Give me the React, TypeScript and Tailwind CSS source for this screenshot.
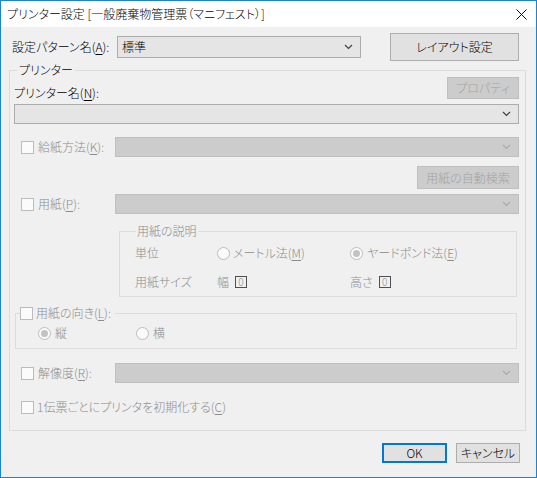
import React from "react";

const FONT = "font-['Noto_Sans_CJK_JP','Noto_Sans',sans-serif] font-light [font-feature-settings:'palt']";

function Chevron({ disabled }: { disabled?: boolean }) {
  return (
    <svg width="9" height="6" viewBox="0 0 9 6" className="shrink-0">
      <polyline
        points="1,1 4.5,4.5 8,1"
        fill="none"
        stroke={disabled ? "#a9a9a9" : "#3c3c3c"}
        strokeWidth="1.1"
      />
    </svg>
  );
}

function Combo({ text, disabled, className }: { text?: string; disabled?: boolean; className: string }) {
  return (
    <div
      className={
        (disabled ? "bg-[#cccccc] border-[#bfbfbf] " : "bg-[#e5e5e5] border-[#adadad] ") +
        "flex items-center justify-between border pl-[4px] pr-[7px] text-black " +
        className
      }
    >
      <span>{text}</span>
      <Chevron disabled={disabled} />
    </div>
  );
}

function Check() {
  return <span className="block w-[13px] h-[13px] shrink-0 border border-[#bcbcbc] bg-[#fbfbfb]" />;
}

function Radio({ checked }: { checked?: boolean }) {
  return (
    <span className="flex w-[13px] h-[13px] shrink-0 items-center justify-center rounded-full border border-[#bcbcbc] bg-[#fbfbfb]">
      {checked && <span className="block w-[7px] h-[7px] rounded-full bg-[#c2c2c2]" />}
    </span>
  );
}

function Mn({ children }: { children: React.ReactNode }) {
  return <span className="underline underline-offset-[2px]">{children}</span>;
}

function DisabledButton({ children, className }: { children: React.ReactNode; className: string }) {
  return (
    <div
      className={
        "flex items-center justify-center border border-[#bfbfbf] bg-[#cccccc] text-[#a3a3a3] " + className
      }
    >
      {children}
    </div>
  );
}

function ValueBox() {
  return (
    <span className="flex w-[12px] h-[12px] items-center justify-center border border-[#505050] text-[10px] leading-none text-[#8c8c8c]">
      0
    </span>
  );
}

export default function App() {
  return (
    <div
      className={
        "w-[537px] h-[478px] flex flex-col border border-[#1883d7] bg-[#f0f0f0] text-[12px] leading-[16px] text-black " +
        FONT
      }
    >
      {/* title bar */}
      <div className="h-[26px] shrink-0 bg-white flex items-center justify-between pl-[6px] pr-[9px]">
        <span>プリンター設定 [一般廃棄物管理票（マニフェスト）]</span>
        <svg width="11" height="11" viewBox="0 0 11 11">
          <path d="M0.5 0.5 L10.5 10.5 M10.5 0.5 L0.5 10.5" stroke="#111" strokeWidth="1" />
        </svg>
      </div>

      <div className="flex flex-col pl-[8px] pr-[10px]">
        {/* pattern row */}
        <div className="mt-[6px] h-[28px] flex items-center">
          <span className="ml-[3px] w-[105px]">
            設定パターン名(<Mn>A</Mn>):
          </span>
          <Combo text="標準" className="w-[244px] h-[22px]" />
          <div className="ml-[29px] w-[129px] h-[28px] flex items-center justify-center border border-[#adadad] bg-[#e1e1e1]">
            レイアウト設定
          </div>
        </div>

        {/* printer group */}
        <fieldset className="mt-[1px] border border-[#dcdcdc] pl-[4px] pr-[6px] pb-[13px]">
          <legend className="ml-[3px] px-[2px] leading-[16px]">プリンター</legend>

          <div className="-mt-[1px] h-[22px] flex items-start justify-between">
            <span className="mt-[8px]">
              プリンター名(<Mn>N</Mn>):
            </span>
            <DisabledButton className="w-[72px] h-[22px]">プロパティ</DisabledButton>
          </div>

          <Combo className="mt-[5px] h-[20px]" />

          <div className="mt-[13px] h-[20px] flex items-center text-[#8c8c8c]">
            <span className="ml-[7px]"><Check /></span>
            <span className="ml-[4px]">
              給紙方法(<Mn>K</Mn>):
            </span>
            <Combo disabled className="ml-auto w-[404px] h-[20px]" />
          </div>

          <div className="mt-[9px] flex justify-end">
            <DisabledButton className="w-[102px] h-[23px]">用紙の自動検索</DisabledButton>
          </div>

          <div className="mt-[5px] h-[20px] flex items-center text-[#8c8c8c]">
            <span className="ml-[7px]"><Check /></span>
            <span className="ml-[4px]">
              用紙(<Mn>P</Mn>):
            </span>
            <Combo disabled className="ml-auto w-[404px] h-[20px]" />
          </div>

          {/* paper description */}
          <fieldset className="mt-[9px] ml-[105px] mr-[2px] border border-[#dcdcdc] pl-[15px] pb-[4px] text-[#8c8c8c]">
            <legend className="ml-[1px] px-[1px] leading-[16px]">用紙の説明</legend>
            <div className="mt-[4px] h-[20px] flex items-center">
              <span className="w-[82px]">単位</span>
              <span className="w-[133px] flex items-center">
                <Radio />
                <span className="ml-[3px]">
                  メートル法(<Mn>M</Mn>)
                </span>
              </span>
              <span className="flex items-center">
                <Radio checked />
                <span className="ml-[4px]">
                  ヤードポンド法(<Mn>E</Mn>)
                </span>
              </span>
            </div>
            <div className="mt-[9px] h-[20px] flex items-center">
              <span className="w-[82px]">用紙サイズ</span>
              <span className="w-[133px] flex items-center">
                <span>幅</span>
                <span className="ml-[6px]"><ValueBox /></span>
              </span>
              <span className="flex items-center">
                <span>高さ</span>
                <span className="ml-[6px]"><ValueBox /></span>
              </span>
            </div>
          </fieldset>

          {/* orientation */}
          <fieldset className="mt-[8px] ml-[1px] mr-[2px] border border-[#dcdcdc] pb-[5px] text-[#8c8c8c]">
            <legend className="ml-[4px] pr-[4px] leading-[16px]">
              <span className="flex items-center">
                <Check />
                <span className="ml-[3px]">
                  用紙の向き(<Mn>L</Mn>):
                </span>
              </span>
            </legend>
            <div className="mt-[2px] h-[20px] flex items-center pl-[22px]">
              <span className="w-[98px] flex items-center">
                <Radio checked />
                <span className="ml-[4px]">縦</span>
              </span>
              <span className="flex items-center">
                <Radio />
                <span className="ml-[4px]">横</span>
              </span>
            </div>
          </fieldset>

          <div className="mt-[14px] h-[20px] flex items-center text-[#8c8c8c]">
            <span className="ml-[7px]"><Check /></span>
            <span className="ml-[4px]">
              解像度(<Mn>R</Mn>):
            </span>
            <Combo disabled className="ml-auto w-[404px] h-[20px]" />
          </div>

          <div className="mt-[14px] h-[20px] flex items-center text-[#8c8c8c]">
            <span className="ml-[7px]"><Check /></span>
            <span className="ml-[3px]">
              1伝票ごとにプリンタを初期化する(<Mn>C</Mn>)
            </span>
          </div>
        </fieldset>

        {/* dialog buttons */}
        <div className="mt-[12px] flex justify-end gap-[9px] pr-[6px]">
          <div className="w-[65px] h-[20px] flex items-center justify-center border-2 border-[#0078d7] bg-[#e1e1e1]">
            OK
          </div>
          <div className="w-[64px] h-[20px] flex items-center justify-center border border-[#adadad] bg-[#e1e1e1]">
            キャンセル
          </div>
        </div>
      </div>
    </div>
  );
}
